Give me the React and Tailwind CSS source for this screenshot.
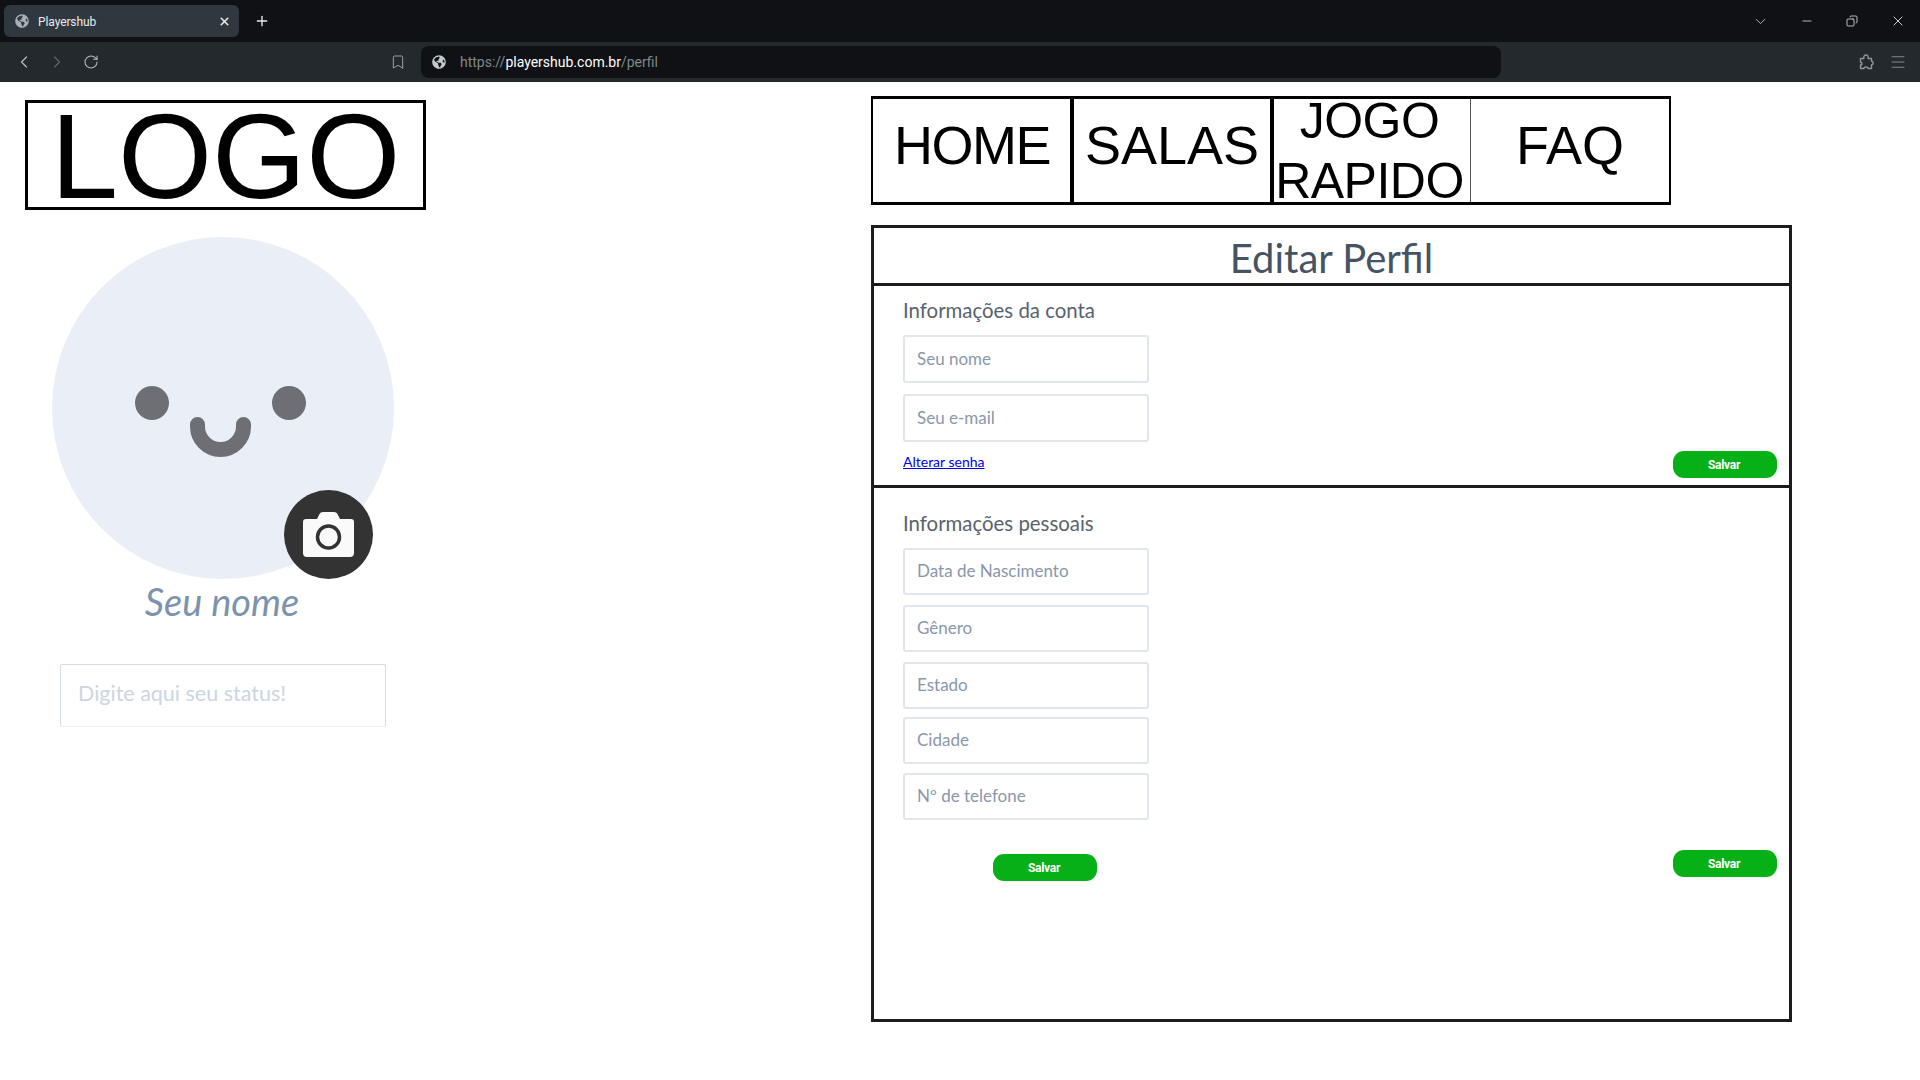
import React from "react";
import {
  ChevronDown,
  ChevronLeft,
  ChevronRight,
  Copy,
  Menu,
  Minus,
  Plus,
  RotateCw,
  Bookmark,
  X,
} from "lucide-react";
import { FaGlobeAmericas } from "react-icons/fa";

const navItems = [
  { label: "HOME", cell: "w-[201px] border-r-[4px] border-black", text: "tracking-[-1.5px] ml-[1px] mb-[11px]" },
  { label: "SALAS", cell: "w-[200px] border-r-[4px] border-black", text: "mb-[11px]" },
  { label: "JOGO RAPIDO", cell: "w-[197px] border-r border-[#555555]", text: "text-[50px] tracking-[-0.5px] mr-[5px]" },
  { label: "FAQ", cell: "flex-1", text: "mb-[11px]" },
];

// Browser window strip and toolbar
function BrowserChrome() {
  return (
    <div className="font-['Roboto',sans-serif]">
      <div className="h-[42px] bg-[#0f1115] flex items-center pl-[4px] text-white">
        <div className="w-[235px] h-[32px] rounded-[6px] bg-[#2f383e] flex items-center pl-[11px] pr-[8px]">
          <FaGlobeAmericas className="text-[#a9b0b5] text-[14px]" />
          <span className="ml-[9px] text-[12px] pt-[1px] tracking-[-0.1px] text-[#e8eaeb] flex-1">Playershub</span>
          <X size={13} strokeWidth={3} className="text-[#e8eaeb]" />
        </div>
        <Plus size={16} strokeWidth={2} className="ml-[15px] text-[#e8eaeb]" />
        <div className="ml-auto flex items-center">
          <ChevronDown size={17} strokeWidth={1.2} className="text-[#c8cacb] mr-[31px]" />
          <Minus size={14} strokeWidth={1.2} className="mr-[32px]" />
          <Copy size={12} strokeWidth={1.4} className="mr-[32px] -scale-x-100" />
          <X size={16} strokeWidth={1.2} className="mr-[14px]" />
        </div>
      </div>
      <div className="h-[40px] bg-[#23292d] flex items-center text-[#9aa2a6]">
        <ChevronLeft size={20} strokeWidth={1.5} className="ml-[14px] text-[#b4babd]" />
        <ChevronRight size={20} strokeWidth={1.5} className="ml-[13px] text-[#5d6569]" />
        <RotateCw size={16} strokeWidth={1.6} className="ml-[16px] text-[#b4babd]" />
        <Bookmark size={16} strokeWidth={1.5} className="ml-[291px]" />
        <div className="ml-[15px] w-[1080px] h-[32px] rounded-[8px] bg-[#0f1115] flex items-center pl-[11px] text-[14px]">
          <FaGlobeAmericas className="text-[#c4c9cc] text-[14px]" />
          <span className="ml-[14px] text-[#7f888d]">
            https://<span className="text-white">playershub.com.br</span>/perfil
          </span>
        </div>
        <svg viewBox="0 0 16 16" className="w-[16px] h-[16px] ml-[357px]">
          <path
            d="M2.5 4.5 H5.8 C5.4 2 6.6 1 8 1 S10.6 2 10.2 4.5 H13.5 V7.3 C15.5 7 15.7 11 13.5 10.7 V14.5 H10 C10.4 12.5 5.6 12.5 6 14.5 H2.5 V11 C4.5 11.4 4.5 8 2.5 8.3 Z"
            fill="none"
            stroke="#8b969c"
            strokeWidth="1.4"
            strokeLinejoin="round"
          />
        </svg>
        <Menu size={18} strokeWidth={1.2} className="ml-[15px] text-[#8b969c]" />
      </div>
    </div>
  );
}

function Avatar() {
  return (
    <div className="relative w-[342px] h-[342px] ml-[27px] mt-[27px]">
      <svg viewBox="0 0 342 342" className="w-full h-full">
        <circle cx="171" cy="171" r="171" fill="#eaeef6" />
        <circle cx="100" cy="166" r="17" fill="#6d6f74" />
        <circle cx="237" cy="166" r="17" fill="#6d6f74" />
        <path
          d="M145.5 187.5 V189.5 A23 23 0 0 0 191.5 189.5 V187.5"
          fill="none"
          stroke="#6d6f74"
          strokeWidth="15"
          strokeLinecap="round"
        />
      </svg>
      <div className="absolute left-[232px] top-[253px] w-[89px] h-[89px] rounded-full bg-[#333333] flex items-center justify-center">
        <svg viewBox="0 0 51 45" className="w-[51px] h-[45px]">
          <path
            d="M3 7 H14 L16.5 2 Q17.5 0 20 0 H31 Q33.5 0 34.5 2 L37 7 H48 Q51 7 51 10 V41 Q51 45 47 45 H4 Q0 45 0 41 V10 Q0 7 3 7 Z"
            fill="#fafafa"
          />
          <circle cx="25.5" cy="25" r="11" fill="none" stroke="#333333" strokeWidth="3.5" />
        </svg>
      </div>
    </div>
  );
}

function Field({ placeholder, className }) {
  return (
    <input
      placeholder={placeholder}
      className={`block w-[246px] px-[12px] pb-[2px] bg-white border-2 border-[#e1e5ec] rounded-[3px] text-[17px] placeholder:text-[#8a97ab] outline-none ${className}`}
    />
  );
}

function SaveButton({ className }) {
  return (
    <button className={`w-[104px] h-[27px] pr-[2px] pt-[1px] rounded-[11px] bg-[#07b017] text-white text-[12px] font-bold tracking-[-0.3px] font-['Roboto',sans-serif] ${className}`}>
      Salvar
    </button>
  );
}

export default function App() {
  return (
    <div className="min-h-screen bg-white font-['Lato',sans-serif]">
      <BrowserChrome />
      <main className="flex">
        <aside className="w-[871px] pt-[18px] pl-[25px]">
          <div className="w-[401px] h-[110px] border-[3px] border-black flex items-center justify-center font-['Liberation_Sans',sans-serif] text-[121px] leading-[100px] pt-[1px] text-black">
            LOGO
          </div>
          <Avatar />
          <p className="w-[342px] ml-[26px] -mt-[2px] text-center italic text-[38px] leading-[48px] text-[#7d93ad]">
            Seu nome
          </p>
          <input
            placeholder="Digite aqui seu status!"
            className="block ml-[35px] mt-[39px] w-[326px] h-[63px] pl-[17px] pb-[6px] border border-[#d5dce8] border-b-[#edf0f5] rounded-[2px] text-[21.5px] placeholder:text-[#ccd5e2] outline-none"
          />
        </aside>

        <section className="pt-[14px]">
          <nav className="w-[800px] h-[109px] flex border-y-[3px] border-x-2 border-black font-['Liberation_Sans',sans-serif] text-[54px] leading-[60px] text-black text-center">
            {navItems.map((item) => (
              <a key={item.label} className={`flex items-center justify-center ${item.cell}`}>
                <span className={item.text}>{item.label}</span>
              </a>
            ))}
          </nav>

          <div className="mt-[20px] w-[921px] h-[797px] border-[3px] border-[#1c1c1c]">
            <h1 className="h-[58px] pt-[5px] flex items-center justify-center border-b-[3px] border-[#1c1c1c] text-[40px] text-[#465362]">
              Editar Perfil
            </h1>

            <div className="h-[202px] border-b-[3px] border-[#1c1c1c] pl-[29px] pr-[12px] pt-[12px]">
              <h2 className="text-[20.4px] leading-[24px] text-[#58636e]">Informações da conta</h2>
              <Field placeholder="Seu nome" className="h-[48px] mt-[13px]" />
              <Field placeholder="Seu e-mail" className="h-[48px] mt-[11px]" />
              <div className="flex items-start justify-between mt-[9px]">
                <a href="#" className="text-[14px] leading-[22px] text-[#0000ee] underline">
                  Alterar senha
                </a>
                <SaveButton />
              </div>
            </div>

            <div className="flex justify-between pl-[29px] pr-[12px] pt-[23px]">
              <div>
                <h2 className="text-[20.4px] leading-[24px] text-[#58636e]">Informações pessoais</h2>
                <Field placeholder="Data de Nascimento" className="h-[47px] mt-[13px]" />
                <Field placeholder="Gênero" className="h-[47px] mt-[10px]" />
                <Field placeholder="Estado" className="h-[47px] mt-[10px]" />
                <Field placeholder="Cidade" className="h-[47px] mt-[8px]" />
                <Field placeholder="Nº de telefone" className="h-[47px] mt-[9px]" />
                <SaveButton className="block ml-[90px] mt-[34px]" />
              </div>
              <SaveButton className="mt-[339px]" />
            </div>
          </div>
        </section>
      </main>
    </div>
  );
}
